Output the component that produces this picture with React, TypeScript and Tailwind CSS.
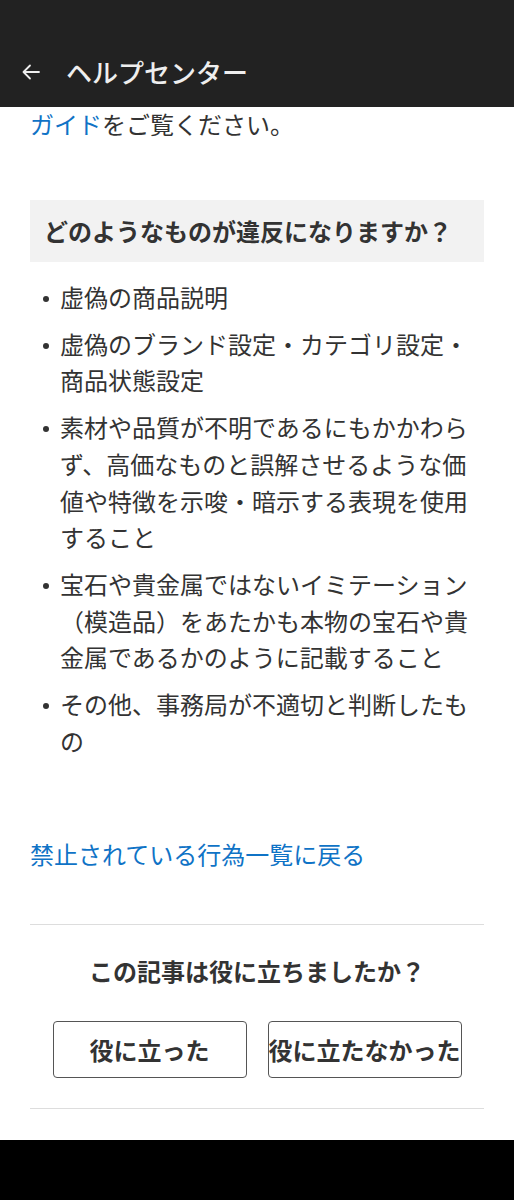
import React from "react";

const items: string[] = [
  "虚偽の商品説明",
  "虚偽のブランド設定・カテゴリ設定・商品状態設定",
  "素材や品質が不明であるにもかかわらず、高価なものと誤解させるような価値や特徴を示唆・暗示する表現を使用すること",
  "宝石や貴金属ではないイミテーション（模造品）をあたかも本物の宝石や貴金属であるかのように記載すること",
  "その他、事務局が不適切と判断したもの",
];

export default function App() {
  return (
    <div
      className="w-[514px] h-[1200px] bg-white flex flex-col overflow-hidden text-[#333]"
      style={{ fontFamily: '"Noto Sans CJK JP", "Noto Sans", sans-serif' }}
    >
      <header className="h-[107px] bg-[#222222] flex flex-col justify-end shrink-0">
        <div className="h-[70px] flex items-center pl-[19px]">
          <svg width="24" height="24" viewBox="0 0 24 24" fill="none" stroke="#eeeeee" strokeWidth="1.8" strokeLinecap="round" strokeLinejoin="round">
            <path d="M20 12H4.5M11 5.5 4.5 12l6.5 6.5" />
          </svg>
          <span className="ml-[23px] text-[26px] text-[#eeeeee] font-medium leading-none">
            ヘルプセンター
          </span>
        </div>
      </header>
      <main className="flex-1 px-[30px] flex flex-col">
        <p className="text-[24px] leading-[36px] mt-[-1px]">
          <span className="text-[#0f73c6]">ガイド</span>をご覧ください。
        </p>
        <div className="mt-[58px] h-[62px] bg-[#f2f2f2] flex items-center px-[14px]">
          <h2 className="text-[24px] font-bold leading-none">どのようなものが違反になりますか？</h2>
        </div>
        <ul className="mt-[17px] flex flex-col gap-[10px]">
          {items.map((t) => (
            <li key={t} className="flex text-[24px] leading-[36.7px]">
              <span className="w-[30px] shrink-0 flex justify-center pt-[17px] pl-[1px]">
                <span className="w-[6px] h-[6px] rounded-full bg-[#333]" />
              </span>
              <span className="flex-1">{t}</span>
            </li>
          ))}
        </ul>
        <a className="mt-[77px] text-[24px] leading-[36px] text-[#0f73c6]">禁止されている行為一覧に戻る</a>
        <div className="mt-[52px] border-t border-[#dddddd]" />
        <p className="mt-[28px] text-center text-[24px] font-bold leading-[36px]">この記事は役に立ちましたか？</p>
        <div className="mt-[32px] flex justify-center gap-[21px]">
          <button className="w-[194px] h-[57px] border border-[#555] rounded-[4px] text-[24px] font-bold flex items-center justify-center whitespace-nowrap overflow-hidden">
            役に立った
          </button>
          <button className="w-[194px] h-[57px] border border-[#555] rounded-[4px] text-[24px] font-bold flex items-center justify-center whitespace-nowrap overflow-hidden">
            役に立たなかった
          </button>
        </div>
        <div className="mt-[30px] border-t border-[#dddddd]" />
      </main>
      <div className="h-[60px] bg-black shrink-0" />
    </div>
  );
}
